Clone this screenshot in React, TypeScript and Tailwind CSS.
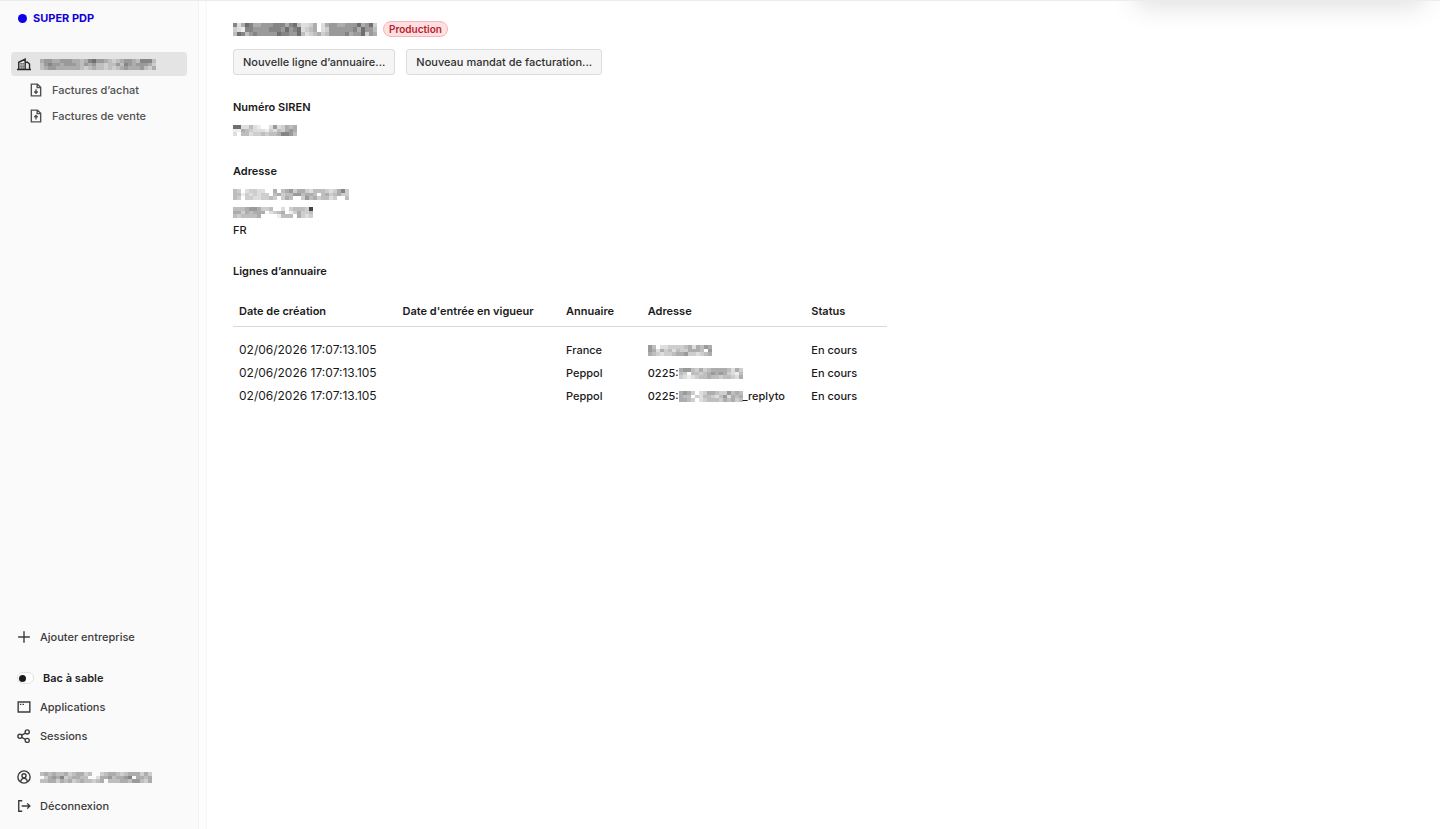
import React from 'react';

const SHADES: Record<string, string> = {
  '1': '#444444', '2': '#6f6f6f', '3': '#858585', '4': '#9a9a9a', '5': '#adadad',
  '6': '#bebebe', '7': '#cecece', '8': '#dedede', '9': '#ededed',
};

function Redacted({ rows, height = 11, label }: { rows: string[]; height?: number; label: string }) {
  const cell = 4;
  const w = rows[0].length * cell;
  const h = rows.length * cell;
  return (
    <svg role="img" aria-label={label} width={w} height={height} viewBox={`0 0 ${w} ${h}`} preserveAspectRatio="none" shapeRendering="crispEdges" className="inline-block shrink-0">
      {rows.flatMap((row, y) =>
        [...row].map((c, x) =>
          SHADES[c] ? <rect key={`${x}-${y}`} x={x * cell} y={y * cell} width={cell} height={cell} fill={SHADES[c]} /> : null,
        ),
      )}
    </svg>
  );
}

const TITLE = ['385235544433353268875.85445544425427', '789334444333424328765.87444444352446', '623643444442334426876576444435442745'];
const COMPANY = ['54455444556532445676544563336', '64344544456454667664634544457', '65445555556765667676545554675'];
const SIREN = ['2288689..8487565', '9956788897867545', '8.66877676653346'];
const ADDR1 = ['67.87788..5.65475578666787537', '669787877.65766446556.6576577', '67.77887767.756..746576687..6'];
const ADDR2 = ['6665445776..8.766671', '55756555.8765.975776', '6766665....9666.5787'];
const USER = ['6565665765576..7655676555757', '.75453765566..855465543.5565', '6655756576566765.66655644675'];
const A1 = ['46.8877776585645', '45857686775556.4', '5678776554778765'];
const A2 = ['5446757655556857', '67.6676545457896', '7898766566766785'];
const A3 = ['5457.87556774656', '566.786678648565', '5567.87666756576'];

function Icon({ children, size = 14 }: { children: React.ReactNode; size?: number }) {
  return (
    <svg aria-hidden="true" width={size} height={size} viewBox="0 0 24 24" fill="none" stroke="currentColor" strokeWidth="2.400" className="shrink-0">
      {children}
    </svg>
  );
}

const docOutline = 'M14.5 2H4v20h16V7.5L14.5 2ZM14 2.500V8h5.500';

const item = 'flex h-6 items-center gap-[9px] rounded px-1.5';

function Sidebar() {
  return (
    <aside className="flex w-[199px] shrink-0 flex-col border-r border-[#f2f2f2] bg-[#fafafa] font-medium text-[#3c3c3c]">
      <a href="#accueil" className="mt-[7px] ml-[18px] flex h-5 items-center gap-1.5 self-start font-bold text-[#1200d8]">
        <span className="size-[9px] rounded-full bg-[#0b00e8]" />
        SUPER PDP
      </a>
      <nav aria-label="Entreprise" className="mt-6 flex flex-col gap-0.5 px-[11px]">
        <a href="#entreprise" aria-current="page" className={`${item} bg-[#e4e4e4] text-[#2a2a2a]`}>
          <Icon>
            <path d="M0 21.500h24M3 21V9l11-5.500V21M14 9h4l3.500 3v9M7 10.500v2.500M10.500 10.500v2.500M7 14.500v2M10.500 14.500v2M7 18v1.500M10.500 18v1.500" />
          </Icon>
          <Redacted rows={COMPANY} label="Nom masqué" />
        </a>
        <a href="#achat" className="flex h-6 items-center gap-[9px] pl-[18px] text-[#505050]">
          <Icon><path d={docOutline} /><path d="M12 10.500v7M9 14.500l3 3 3-3" /></Icon>
          Factures d’achat
        </a>
        <a href="#vente" className="flex h-6 items-center gap-[9px] pl-[18px] text-[#505050]">
          <Icon><path d={docOutline} /><path d="M12 18v-7M9 14l3-3 3 3" /></Icon>
          Factures de vente
        </a>
      </nav>
      <nav aria-label="Compte" className="mt-auto flex flex-col gap-[5px] px-[11px] pb-[11px]">
        <a href="#ajouter" className={`${item} mb-3`}>
          <Icon><path d="M12 2v20M2 12h20" /></Icon>
          Ajouter entreprise
        </a>
        <label className={`${item} font-semibold text-[#1f1f1f]`}>
          <input type="checkbox" role="switch" className="peer sr-only" />
          <span className="flex h-3 w-[17px] items-center rounded-full border border-[#e2e2e2] bg-white px-px">
            <span className="size-[7px] rounded-full bg-[#1c1c1c]" />
          </span>
          Bac à sable
        </label>
        <a href="#applications" className={item}>
          <Icon><path d="M2 3.500h20v17H2ZM5 7.500h2.500M9.500 7.500H12" /></Icon>
          Applications
        </a>
        <a href="#sessions" className={`${item} mb-3`}>
          <Icon>
            <circle cx="5" cy="12.500" r="3.500" /><circle cx="17.500" cy="5" r="3.500" /><circle cx="17.500" cy="19.500" r="3.500" />
            <path d="m8 10.500 6.500-3.500M8 14.500l6.500 3.200" />
          </Icon>
          Sessions
        </a>
        <a href="#profil" className={item}>
          <Icon>
            <circle cx="12" cy="12" r="10.500" /><circle cx="12" cy="10" r="3.500" /><path d="M6.500 20c0-7.500 11-7.500 11 0" />
          </Icon>
          <Redacted rows={USER} label="Utilisateur masqué" />
        </a>
        <a href="#deconnexion" className={item}>
          <Icon><path d="M9 3H3v18h6M8 12h14M17.500 7.500 22 12l-4.500 4.500" /></Icon>
          Déconnexion
        </a>
      </nav>
    </aside>
  );
}

const lines = [
  { registry: 'France', prefix: '', rows: A1, suffix: '' },
  { registry: 'Peppol', prefix: '0225:', rows: A2, suffix: '' },
  { registry: 'Peppol', prefix: '0225:', rows: A3, suffix: '_replyto' },
];

const button = 'h-[26px] rounded-[3px] border border-[#dcdcdc] bg-[#f5f5f5] px-[9px] font-medium text-[#303030]';

export default function App() {
  return (
    <div className="relative flex min-h-screen overflow-hidden border-t border-[#ececec] bg-white font-['Inter',sans-serif] text-[11px] leading-[18px] text-[#1a1a1a]">
      <Sidebar />
      <div className="w-2 shrink-0 border-r border-[#f7f7f7] bg-[#fdfdfd]" />
      <main className="min-w-0 grow px-[26px] pt-5 font-medium">
        <header className="flex h-4 items-center gap-1.5">
          <h1 className="flex"><Redacted rows={TITLE} height={13} label="Entreprise masquée" /></h1>
          <span className="flex h-4 items-center rounded-full border border-[#f6b5ba] bg-[#fde0e2] px-[5px] text-[10px] font-semibold text-[#b91c2b]">Production</span>
        </header>
        <div className="mt-3 flex gap-[11px]">
          <button type="button" className={button}>Nouvelle ligne d’annuaire...</button>
          <button type="button" className={button}>Nouveau mandat de facturation...</button>
        </div>
        <section className="mt-[23px]">
          <h2 className="font-semibold">Numéro SIREN</h2>
          <p className="mt-[5px] flex h-[18px] items-center"><Redacted rows={SIREN} label="SIREN masqué" /></p>
        </section>
        <section className="mt-[23px]">
          <h2 className="font-semibold">Adresse</h2>
          <address className="mt-[5px] not-italic">
            <div className="flex h-[18px] items-center"><Redacted rows={ADDR1} label="Rue masquée" /></div>
            <div className="flex h-[18px] items-center"><Redacted rows={ADDR2} label="Ville masquée" /></div>
            <div>FR</div>
          </address>
        </section>
        <section className="mt-[23px]">
          <h2 className="font-semibold">Lignes d’annuaire</h2>
          <table className="mt-4 w-full max-w-[654px] table-fixed text-left">
            <colgroup>
              <col className="w-1/4" /><col className="w-1/4" /><col className="w-1/8" /><col className="w-1/4" /><col className="w-1/8" />
            </colgroup>
            <thead>
              <tr className="h-[30px] border-b border-[#d9d9d9]">
                {['Date de création', "Date d'entrée en vigueur", 'Annuaire', 'Adresse', 'Status'].map((t) => (
                  <th key={t} scope="col" className="px-1.5 font-semibold whitespace-nowrap">{t}</th>
                ))}
              </tr>
            </thead>
            <tbody className="before:block before:h-3">
              {lines.map((l, i) => (
                <tr key={i} className="h-[23px]">
                  <td className="px-1.5 text-[12px] font-normal whitespace-nowrap">02/06/2026 17:07:13.105</td>
                  <td />
                  <td className="px-1.5">{l.registry}</td>
                  <td className="px-1.5"><span className="flex items-center">{l.prefix}<Redacted rows={l.rows} label="Numéro masqué" />{l.suffix}</span></td>
                  <td className="px-1.5">En cours</td>
                </tr>
              ))}
            </tbody>
          </table>
        </section>
      </main>
      <div aria-hidden="true" className="absolute -top-10 right-5 h-10 w-[280px] shadow-[0_0_28px_4px_rgba(0,0,0,0.14)]" />
    </div>
  );
}
